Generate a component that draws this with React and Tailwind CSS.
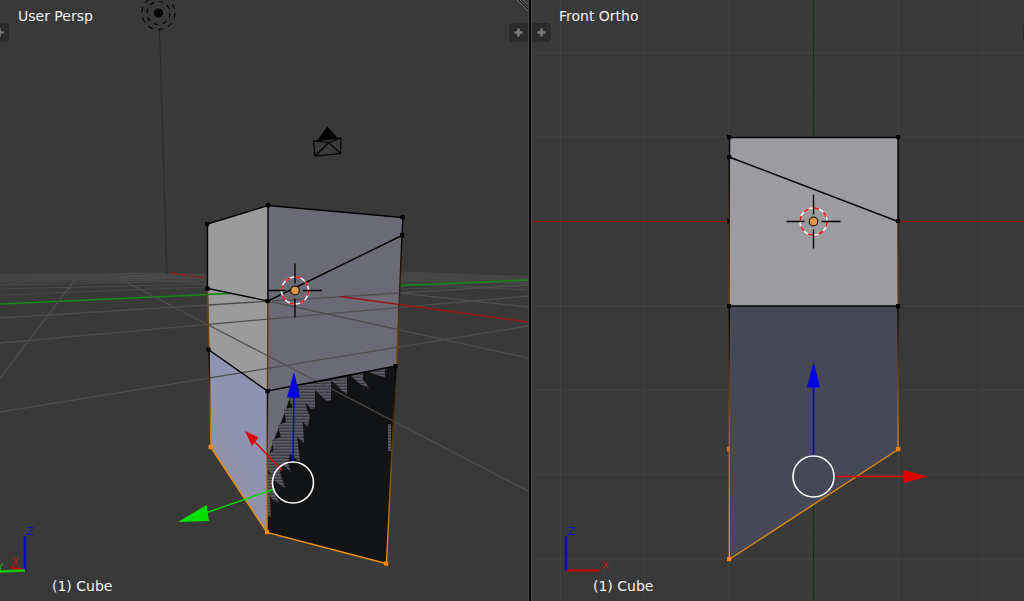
import React from 'react';
import { clsx } from 'clsx';

// near-horizon floor lines of the perspective grid: [x1, y1, x2, y2]
const horizonLines = [
  [0, 275, 165, 273],
  [0, 276, 206, 275],
  [0, 278, 206, 276],
  [0, 280, 206, 278],
  [0, 282, 206, 280],
  [0, 285, 206, 281],
  [0, 289, 206, 284],
  [0, 295, 206, 287],
  [0, 286, 60, 275],
  [206, 279, 60, 274],
  [206, 284, 90, 275],
  [206, 276, 130, 273],
  [400, 272, 528, 277],
  [400, 274, 528, 279],
  [400, 276, 528, 281],
  [400, 279, 528, 284],
  [400, 283, 528, 290],
  [400, 278, 528, 276],
  [400, 281, 528, 279],
  [400, 286, 528, 282],
  [400, 289, 528, 285],
];

const floorLines = [
  [0, 318, 400, 293],
  [400, 293, 528, 285],
  [0, 343, 528, 296],
  [0, 412, 528, 326],
  [0, 378, 75, 280],
  [120, 279, 528, 491],
  [268, 301, 528, 358],
  [400, 293, 528, 307],
];

// places where the two overlapping faces fight for depth
const teeth = [
  '369,372 385,368 385,377 380,376',
  '351,376 363,373 363,380 366,383 369,388 360,384',
  '330,380 347,377 347,394 341,390 338,386',
  '315,383 331,380 331,400 327,401 320,395 315,390',
  '298,385 315,383 315,408 311,409 306,403 300,399',
  '290,392 304,392 307,410 310,416 308,427 301,420 290,402',
  '284,409 300,406 303,424 304,443 297,437 286,422',
  '278,425 292,420 297,436 300,462 292,456 281,438',
  '272,440 284,436 291,450 288,463 291,472 284,466 274,454',
  '268,454 275,450 283,464 280,472 285,488 276,482 268,470',
  '268,474 274,476 273,488 279,503 272,499 268,494',
  '268,494 270,496 271,517 268,516',
];

const majorX = [560.5, 644.5, 729, 898, 982.5];
const majorY = [52.5, 137, 306, 390, 474.5, 559];

function Vertex({ x, y, selected }) {
  return <rect x={x - 2} y={y - 2} width="4.2" height="4.2" fill={selected ? '#ff8500' : '#000'} />;
}

function Cursor3D({ x, y }) {
  return (
    <g transform={`translate(${x} ${y})`} fill="none">
      <circle r="13.5" stroke="#f4f4f4" strokeWidth="1.6" />
      <circle r="13.5" stroke="#f01414" strokeWidth="1.6" strokeDasharray="5.3 5.3" />
      <path d="M-27 0H-9M8 0H27M0-27V-7M0 8V27" stroke="#000" strokeWidth="1.3" />
      <circle r="4.3" fill="#dc9a50" stroke="#2a1a08" strokeWidth="1.2" />
    </g>
  );
}

function RegionButton({ label, side, className }) {
  return (
    <button
      type="button"
      aria-label={label}
      className={clsx(
        'flex h-[19px] w-[19px] shrink-0 cursor-pointer items-center justify-center bg-[#2b2b2b]',
        side === 'left' ? 'rounded-r-sm' : 'rounded-l-sm',
        className
      )}
    >
      <svg viewBox="0 0 9 9" className="h-[9px] w-[9px]">
        <path d="M4.5 0.5V8.5M0.5 4.5H8.5" stroke="#7c7c7c" strokeWidth="2.6" />
      </svg>
    </button>
  );
}

function PerspectiveScene() {
  return (
    <svg
      viewBox="0 0 528 601"
      preserveAspectRatio="xMidYMid slice"
      className="absolute inset-0 h-full w-full"
      aria-hidden="true"
    >
      <defs>
        <linearGradient id="lowerFace" x1="1" y1="0" x2="0.4" y2="1">
          <stop offset="0.6" stopColor="#8f92b0" />
          <stop offset="1" stopColor="#95919c" />
        </linearGradient>
        <linearGradient id="leftEdge" gradientUnits="userSpaceOnUse" x1="0" y1="350" x2="0" y2="447">
          <stop offset="0" stopColor="#000" />
          <stop offset="1" stopColor="#ee8e08" />
        </linearGradient>
        <linearGradient id="midEdge" gradientUnits="userSpaceOnUse" x1="0" y1="391" x2="0" y2="532">
          <stop offset="0" stopColor="#000" />
          <stop offset="1" stopColor="#ee8e08" />
        </linearGradient>
        <linearGradient id="rightEdge" gradientUnits="userSpaceOnUse" x1="0" y1="366" x2="0" y2="564">
          <stop offset="0" stopColor="#000" />
          <stop offset="1" stopColor="#f79308" />
        </linearGradient>
        <linearGradient id="brownEdge" gradientUnits="userSpaceOnUse" x1="0" y1="235" x2="0" y2="366">
          <stop offset="0" stopColor="#000" />
          <stop offset="1" stopColor="#85530b" />
        </linearGradient>
        <pattern id="stripes" width="8" height="3" patternUnits="userSpaceOnUse">
          <rect width="8" height="3" fill="#3c3c43" />
          <rect width="8" height="1.6" fill="#5c5b66" />
        </pattern>
      </defs>

      {/* lamp stem */}
      <path d="M159.5 30L163.5 160L167 278" stroke="#2b2b2b" fill="none" />

      {/* floor behind the mesh */}
      <polygon points="0,275 206,273 206,279 0,281" fill="#424242" />
      <polygon points="400,272 528,277 528,284 400,282" fill="#424242" />
      <g stroke="#4a4a4a" strokeWidth="1">
        {horizonLines.map(([x1, y1, x2, y2], i) => (
          <line key={i} x1={x1} y1={y1} x2={x2} y2={y2} />
        ))}
      </g>
      <path d="M0 304L231 293.5M400 285.5L528 280" stroke="#158a15" strokeWidth="1.6" />
      <path d="M171 273L206 278" stroke="#9c1717" strokeWidth="1.3" strokeDasharray="7 2" />

      {/* mesh faces */}
      <polygon points="207,224 268,205 267,391 209,350" fill="#9b9b9b" />
      <polygon points="268,205 403,217 396,366 267,391" fill="#6b6b77" />
      <polygon points="209,350 267,391 267,532 211,447" fill="url(#lowerFace)" />
      <polygon points="267,391 396,366 386,564 267,532" fill="#121315" />
      <polygon points="268,391 299,385 291,394 285,412 279,427 273,442 268,458" fill="#6b6b77" />
      {teeth.map((points) => (
        <polygon key={points} points={points} fill="url(#stripes)" />
      ))}
      <rect x="388" y="424" width="3" height="27" fill="url(#stripes)" />
      <path d="M207 294.4L231 293.5" stroke="#158a15" strokeWidth="1.6" />

      <g stroke="#4e4e4e" strokeWidth="1.3">
        {floorLines.map(([x1, y1, x2, y2], i) => (
          <line key={i} x1={x1} y1={y1} x2={x2} y2={y2} />
        ))}
      </g>
      <path d="M340 296.5L528 322" stroke="#981818" strokeWidth="1.4" />

      {/* mesh edges */}
      <g fill="none" strokeWidth="1.4">
        <path d="M207.5 224L268 205.5L403 217.5L402 235.5L268 301L207.5 288.5Z" stroke="#000" />
        <path d="M268 205V301M209 350L267.5 391L396 366" stroke="#000" />
        <path d="M207.5 288L209 350" stroke="#6b430d" />
        <path d="M268 301L267.5 391" stroke="#5e3d10" />
        <path d="M402 235L396.5 366" stroke="url(#brownEdge)" />
        <path d="M209 350L211 447" stroke="url(#leftEdge)" />
        <path d="M267.5 391L267 532" stroke="url(#midEdge)" />
        <path d="M396 366L386.5 564" stroke="url(#rightEdge)" />
        <path d="M211 447.5L267 532.5L386 563.5" stroke="#f09110" />
      </g>
      <Vertex x={207} y={224} />
      <Vertex x={268} y={205} />
      <Vertex x={402.5} y={217} />
      <Vertex x={402} y={235} />
      <Vertex x={207.5} y={288.5} />
      <Vertex x={267.5} y={301} />
      <Vertex x={208.5} y={349.5} />
      <Vertex x={267.5} y={391} />
      <Vertex x={395.5} y={366} />
      <Vertex x={210.5} y={447} selected />
      <Vertex x={267} y={532} selected />
      <Vertex x={386} y={563.5} selected />

      {/* lamp */}
      <g fill="none" stroke="#000" strokeWidth="1.2">
        <circle cx="158.5" cy="13" r="4" fill="#000" />
        <circle cx="158.5" cy="13" r="11.5" strokeDasharray="4.5 4.5" />
        <circle cx="158.5" cy="13" r="16.5" strokeDasharray="5.2 5.2" />
      </g>

      {/* camera */}
      <polygon points="317,140.5 327.5,126.5 338,138.5" fill="#000" />
      <path
        d="M313.5 141L341 138L340.5 153.5L315 156ZM313.5 141L329 142.5L341 138M315 156L329 142.5L340.5 153.5"
        fill="none"
        stroke="#000"
        strokeWidth="1.2"
      />

      <Cursor3D x={295} y={290.5} />

      {/* transform manipulator */}
      <path d="M293 463L294 397" stroke="#0808dc" strokeWidth="1.6" />
      <polygon points="287,397.5 300,397.5 294,372" fill="#0000e0" />
      <path d="M282 470.5L255 442" stroke="#d90808" strokeWidth="1.4" />
      <polygon points="245,431 258.5,437.5 252,446" fill="#e00000" />
      <path d="M274.5 489L207 512.5" stroke="#00d900" strokeWidth="1.4" />
      <polygon points="178,522 206.5,505 209,521" fill="#00e000" />
      <circle cx="293" cy="482.5" r="20.5" fill="none" stroke="#fff" strokeWidth="1.6" />

      {/* orientation axes */}
      <path d="M10 567.5L25 570" stroke="#b80d0d" strokeWidth="2.5" />
      <path d="M25 536.5V570.5" stroke="#0d0dc4" strokeWidth="2.6" />
      <path d="M0 571.5L25 570.5" stroke="#0dc40d" strokeWidth="2.6" />
      <g fontFamily="DejaVu Sans, sans-serif" fontSize="11">
        <text x="26.5" y="535" fill="#1414c0">Z</text>
        <text x="11.5" y="566" fill="#c01414">X</text>
        <text x="-3" y="571" fill="#14b014">Y</text>
      </g>

      {/* area corner grip */}
      <path d="M517 0L528 10.5M520 0L528 7.5M523 0L528 4.5" stroke="#747474" strokeWidth="1" />
      <path d="M518.5 0L528 9M521.5 0L528 6" stroke="#111" strokeWidth="1" />
    </svg>
  );
}

function OrthoScene() {
  return (
    <svg
      viewBox="532 0 492 601"
      preserveAspectRatio="xMidYMid slice"
      className="absolute inset-0 h-full w-full"
      aria-hidden="true"
    >
      <defs>
        <pattern id="minorGrid" x="560" y="52.5" width="8.44" height="8.44" patternUnits="userSpaceOnUse">
          <path d="M0.5 0V8.44M0 0.5H8.44" stroke="#3b3b3b" strokeWidth="1" />
        </pattern>
        <linearGradient id="sideUpper" gradientUnits="userSpaceOnUse" x1="0" y1="157" x2="0" y2="306">
          <stop offset="0" stopColor="#000" />
          <stop offset="1" stopColor="#6b430d" />
        </linearGradient>
        <linearGradient id="sideRight" gradientUnits="userSpaceOnUse" x1="0" y1="306" x2="0" y2="449">
          <stop offset="0" stopColor="#000" />
          <stop offset="1" stopColor="#d8840f" />
        </linearGradient>
        <linearGradient id="sideLeft" gradientUnits="userSpaceOnUse" x1="0" y1="306" x2="0" y2="559">
          <stop offset="0" stopColor="#000" />
          <stop offset="0.6" stopColor="#b06d10" />
          <stop offset="1" stopColor="#e8900f" />
        </linearGradient>
      </defs>

      <rect x="530" y="0" width="494" height="601" fill="url(#minorGrid)" />
      <g stroke="#424242">
        {majorX.map((x) => (
          <line key={x} x1={x} y1="0" x2={x} y2="601" />
        ))}
        {majorY.map((y) => (
          <line key={y} x1="530" y1={y} x2="1024" y2={y} />
        ))}
      </g>
      <rect x="813" y="0" width="1" height="601" fill="#1616a0" />
      <rect x="530" y="221" width="494" height="1" fill="#961616" />

      {/* mesh */}
      <rect x="729" y="137" width="169" height="169" fill="#9b9ba0" />
      <polygon points="729,306 898,306 898,449 729,559" fill="#464858" />
      <g fill="none" strokeWidth="1.4">
        <path d="M729.5 157V137.5H898V221" stroke="#000" />
        <path d="M729.5 306H898" stroke="#000" />
        <path d="M729 157L898 221.5" stroke="#000" />
        <path d="M729.2 157L729.3 306" stroke="url(#sideUpper)" />
        <path d="M898 221L898.1 306" stroke="url(#sideUpper)" />
        <path d="M898 306L898.1 449" stroke="url(#sideRight)" />
        <path d="M729.2 306L729.3 559" stroke="url(#sideLeft)" />
        <path d="M729 559.5L898 449.5" stroke="#e08c10" />
      </g>
      <rect x="727" y="219" width="2" height="4.5" fill="#000" />
      <rect x="727" y="447" width="2" height="4.5" fill="#d87c10" />
      <Vertex x={729} y={137} />
      <Vertex x={898} y={137} />
      <Vertex x={729} y={157} />
      <Vertex x={898} y={221} />
      <Vertex x={729} y={306} />
      <Vertex x={898} y={306} />
      <Vertex x={898} y={449} selected />
      <Vertex x={729} y={559} selected />

      <Cursor3D x={813.5} y={221.5} />

      {/* transform manipulator */}
      <path d="M813.5 457V387" stroke="#0808c8" strokeWidth="1.6" />
      <polygon points="807,387.5 820,387.5 813.5,362" fill="#0000e0" />
      <path d="M834 476.5H904" stroke="#e00000" strokeWidth="1.5" />
      <polygon points="903.5,470 903.5,483 928,476.5" fill="#e00000" />
      <circle cx="813.5" cy="476.5" r="20.5" fill="none" stroke="#fff" strokeWidth="1.6" />

      {/* orientation axes */}
      <path d="M566 570.5H600" stroke="#b80d0d" strokeWidth="2.4" />
      <path d="M566 536.5V570.5" stroke="#0d0dc4" strokeWidth="2.6" />
      <g fontFamily="DejaVu Sans, sans-serif" fontSize="11">
        <text x="567.5" y="535" fill="#1414c0">Z</text>
        <text x="601.5" y="569" fill="#c01414">X</text>
      </g>
    </svg>
  );
}

function Viewport({ className, scene, view, object, viewClass, objectClass, children }) {
  return (
    <section
      aria-label={view}
      className={clsx(
        'relative flex min-w-0 flex-col justify-between overflow-hidden border-[#4c4c4c] bg-[#393939] text-sm text-[#f2f2f2]',
        className
      )}
    >
      {scene}
      <div className="relative">
        <h2 className={clsx('pt-2.5 leading-[13px]', viewClass)}>{view}</h2>
        <div className="flex justify-between">{children}</div>
      </div>
      <p className={clsx('relative pb-[5px] leading-5', objectClass)}>{object}</p>
    </section>
  );
}

export default function App() {
  return (
    <main className="flex h-screen bg-black font-['DejaVu_Sans',sans-serif]">
      <Viewport
        className="flex-[529] border-r"
        scene={<PerspectiveScene />}
        view="User Persp"
        object="(1) Cube"
        viewClass="pl-[18px]"
        objectClass="pl-[52px]"
      >
        <RegionButton label="Show tool shelf" side="left" className="-ml-2.5" />
        <RegionButton label="Show properties" side="right" />
      </Viewport>
      <div className="w-0.5 shrink-0" />
      <Viewport
        className="flex-[493] border-l"
        scene={<OrthoScene />}
        view="Front Ortho"
        object="(1) Cube"
        viewClass="pl-[27px]"
        objectClass="pl-[61px]"
      >
        <RegionButton label="Show tool shelf" side="left" />
        <RegionButton label="Show properties" side="right" className="-mr-[18px]" />
      </Viewport>
    </main>
  );
}
